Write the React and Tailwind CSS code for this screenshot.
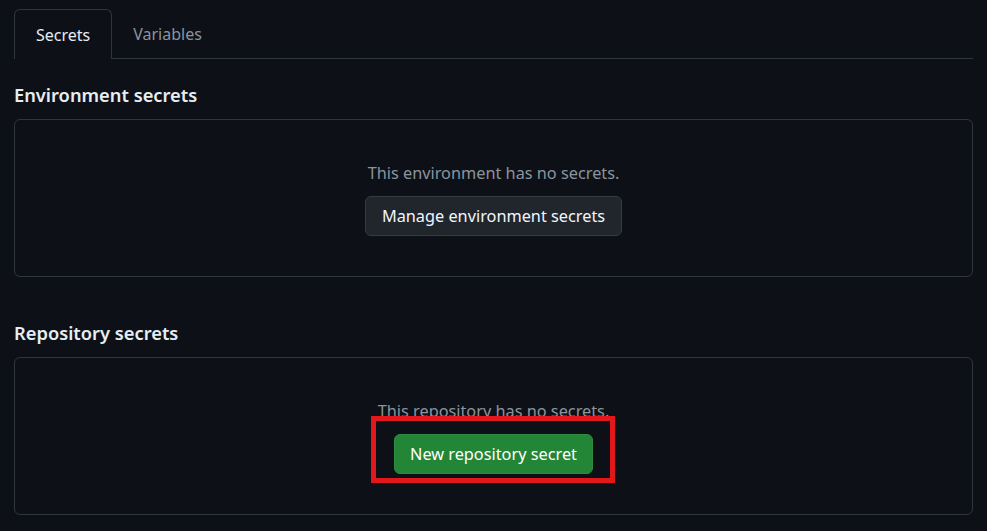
const font = { fontFamily: '"Noto Sans", "Liberation Sans", sans-serif' }

function EmptySection({ title, message, children }) {
  return (
    <section>
      <h2 className="text-[18.3px] font-semibold leading-[30px] text-[#e6edf3]">{title}</h2>
      <div className="mt-[9px] flex h-[158px] flex-col items-center rounded-[6px] border border-[#30363d] pt-[41px]">
        <p className="text-[16.3px] leading-[24px] text-[#8b949e]">{message}</p>
        <div className="mt-[11px]">{children}</div>
      </div>
    </section>
  )
}

export default function App() {
  return (
    <div className="min-h-screen bg-[#0d1117] px-[14px] pt-[9px]" style={font}>
      <div className="flex border-b border-[#30363d]">
        <div className="-mb-px flex h-[50px] items-center rounded-t-[6px] border border-b-0 border-[#30363d] bg-[#0d1117] px-[21px] text-[16px] text-[#e6edf3]">
          Secrets
        </div>
        <div className="flex h-[49px] items-center px-[21px] text-[16px] text-[#8b949e]">Variables</div>
      </div>

      <div className="mt-[21px]">
        <EmptySection title="Environment secrets" message="This environment has no secrets.">
          <button className="flex h-[40px] items-center rounded-[6px] border border-[#363b42] bg-[#21262d] px-[16px] text-[16.3px] text-[#f0f6fc]">
            Manage environment secrets
          </button>
        </EmptySection>
      </div>

      <div className="mt-[41px]">
        <EmptySection title="Repository secrets" message="This repository has no secrets.">
          <div className="relative">
            <button className="flex h-[40px] items-center rounded-[6px] border border-[#2f8a40] bg-[#238636] px-[15px] text-[16.3px] text-white">
              New repository secret
            </button>
            <span className="pointer-events-none absolute -top-[18px] -right-[22px] -bottom-[9px] -left-[23px] border-[5px] border-[#e3161c]" />
          </div>
        </EmptySection>
      </div>
    </div>
  )
}
